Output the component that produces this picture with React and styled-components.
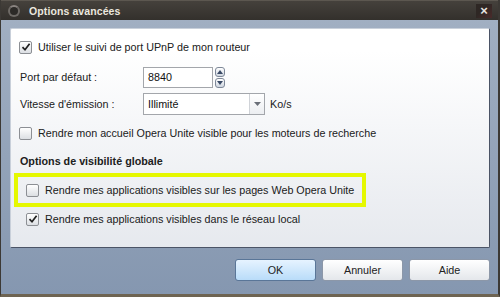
import React from 'react'
import styled, { createGlobalStyle } from 'styled-components'

const GlobalStyle = createGlobalStyle`
  html, body {
    margin: 0;
    padding: 0;
    width: 500px;
    height: 297px;
    overflow: hidden;
    background: #3b3833;
  }
  * { box-sizing: border-box; }
`;

function CheckBox({ checked }) {
  return (
    <Box>
      {checked && (
        <svg width="10" height="10" viewBox="0 0 10 10">
          <path d="M1.5 5.2 L4 7.8 L8.6 1.8" fill="none" stroke="#1f1f1f" strokeWidth="1.7" />
        </svg>
      )}
    </Box>
  );
}

function App() {
  return (
    <Window>
      <GlobalStyle />
      <TitleBar>
        <TitleIcon />
        <Title>Options avancées</Title>
        <Close>×</Close>
      </TitleBar>

      <Body>
        <Panel>
          <CheckRow>
            <CheckBox checked />
            <Label>Utiliser le suivi de port UPnP de mon routeur</Label>
          </CheckRow>

          <FieldRow $top={12}>
            <FieldLabel>Port par défaut :</FieldLabel>
            <TextInput>8840</TextInput>
            <Spinner>
              <SpinButton>
                <svg width="6" height="4" viewBox="0 0 6 4"><path d="M0 4 L3 0 L6 4Z" fill="#3a4a66" /></svg>
              </SpinButton>
              <SpinButton>
                <svg width="6" height="4" viewBox="0 0 6 4"><path d="M0 0 L3 4 L6 0Z" fill="#3a4a66" /></svg>
              </SpinButton>
            </Spinner>
          </FieldRow>

          <FieldRow $top={5}>
            <FieldLabel>Vitesse d'émission :</FieldLabel>
            <Select>
              <SelectValue>Illimité</SelectValue>
              <SelectArrow>
                <svg width="7" height="4" viewBox="0 0 7 4"><path d="M0 0 L3.5 4 L7 0Z" fill="#6a6f78" /></svg>
              </SelectArrow>
            </Select>
            <Unit>Ko/s</Unit>
          </FieldRow>

          <CheckRow $top={11}>
            <CheckBox />
            <Label>Rendre mon accueil Opera Unite visible pour les moteurs de recherche</Label>
          </CheckRow>

          <SectionTitle>Options de visibilité globale</SectionTitle>

          <Highlight>
            <CheckRow>
              <CheckBox />
              <Label>Rendre mes applications visibles sur les pages Web Opera Unite</Label>
            </CheckRow>
          </Highlight>

          <IndentRow>
            <CheckBox checked />
            <Label>Rendre mes applications visibles dans le réseau local</Label>
          </IndentRow>
        </Panel>

        <ButtonBar>
          <Button $primary>OK</Button>
          <Button>Annuler</Button>
          <Button>Aide</Button>
        </ButtonBar>
      </Body>
    </Window>
  )
}

export default App

const Window = styled.div`
  width: 500px;
  height: 297px;
  display: flex;
  flex-direction: column;
  font-family: "Liberation Sans", Arial, sans-serif;
  font-size: 10.75px;
  color: #1c1c1c;
  border-left: 1px solid #3c3935;
  border-right: 2px solid #3c3935;
  border-bottom: 3px solid #6e6452;
`;

const TitleBar = styled.div`
  height: 20px;
  display: flex;
  align-items: center;
  padding: 0 6px 0 7px;
  background: linear-gradient(#45413c, #33302c);
  border-top: 1px solid #5c5750;
`;

const TitleIcon = styled.div`
  width: 12px;
  height: 12px;
  border-radius: 50%;
  border: 2px solid #6e6a66;
  background: #2c2a27;
  border-top-color: #8a8480;
`;

const Title = styled.div`
  margin-left: 9px;
  flex: 1;
  color: #ebe7df;
  font-weight: bold;
  font-size: 10.5px;
  letter-spacing: 0.1px;
`;

const Close = styled.div`
  width: 16px;
  height: 14px;
  display: flex;
  align-items: center;
  justify-content: center;
  background: linear-gradient(135deg, #2e2724 40%, #4a2a2a);
  color: #e8e4e0;
  font-weight: bold;
  font-size: 13px;
  line-height: 1;
`;

const Body = styled.div`
  flex: 1;
  display: flex;
  flex-direction: column;
  padding: 8px 8px 0 9px;
  background: linear-gradient(#a1afc2, #8597b0);
`;

const Panel = styled.div`
  height: 220px;
  display: flex;
  flex-direction: column;
  padding: 11px 0 0 8px;
  background: linear-gradient(#ffffff 10%, #e6e9ee);
  border: 1px solid #c9d0da;
  border-right-color: #4b5466;
  border-bottom-color: #4b5466;
  border-radius: 2px;
`;

const CheckRow = styled.div`
  display: flex;
  align-items: center;
  gap: 6px;
  margin-top: ${p => (p.$top ?? 0)}px;
  height: 14px;
`;

const IndentRow = styled(CheckRow)`
  margin: 5px 0 0 7px;
`;

const Box = styled.div`
  width: 13px;
  height: 13px;
  flex: none;
  display: flex;
  align-items: center;
  justify-content: center;
  border: 1px solid #8c8f94;
  border-radius: 2px;
  background: linear-gradient(#ffffff, #dcdfe3);
`;

const Label = styled.span`
  white-space: nowrap;
  color: #202020;
`;

const FieldRow = styled.div`
  display: flex;
  align-items: center;
  margin-top: ${p => p.$top}px;
  height: 22px;
`;

const FieldLabel = styled.span`
  width: 124px;
  padding-left: 1px;
  color: #202020;
`;

const TextInput = styled.div`
  width: 70px;
  height: 21px;
  padding: 0 4px;
  display: flex;
  align-items: center;
  background: #fff;
  border: 1px solid #a3a6ab;
  color: #111;
`;

const Spinner = styled.div`
  display: flex;
  flex-direction: column;
  gap: 1px;
  margin-left: 2px;
`;

const SpinButton = styled.div`
  width: 10px;
  height: 10px;
  display: flex;
  align-items: center;
  justify-content: center;
  border: 1px solid #7e8898;
  border-radius: 3px;
  background: linear-gradient(#ffffff, #cfd6e0);
`;

const Select = styled.div`
  width: 122px;
  height: 22px;
  display: flex;
  border: 1px solid #a3a6ab;
  background: #fff;
`;

const SelectValue = styled.div`
  flex: 1;
  display: flex;
  align-items: center;
  padding-left: 4px;
  color: #111;
`;

const SelectArrow = styled.div`
  width: 15px;
  display: flex;
  align-items: center;
  justify-content: center;
  border-left: 1px solid #d0d3d8;
  background: linear-gradient(#ffffff, #eceef1);
`;

const Unit = styled.span`
  margin-left: 5px;
  color: #202020;
`;

const SectionTitle = styled.div`
  margin-top: 15px;
  height: 13px;
  line-height: 13px;
  padding-left: 1px;
  font-weight: bold;
  color: #202020;
`;

const Highlight = styled.div`
  width: 352px;
  height: 34px;
  margin: 5px 0 0 -5px;
  padding-left: 8px;
  display: flex;
  align-items: center;
  border: 4px solid #e5f800;
`;

const ButtonBar = styled.div`
  display: flex;
  justify-content: flex-end;
  gap: 6px;
  padding: 11px 0 0;
`;

const Button = styled.div`
  width: 81px;
  height: 22px;
  display: flex;
  align-items: center;
  justify-content: center;
  border-radius: 3px;
  color: #222;
  border: 1px solid ${p => (p.$primary ? '#5a7698' : '#8c97a8')};
  background: ${p => (p.$primary
    ? 'linear-gradient(#e6f3ff, #b9dcf9)'
    : 'linear-gradient(#ffffff, #e4e7eb)')};
`;
